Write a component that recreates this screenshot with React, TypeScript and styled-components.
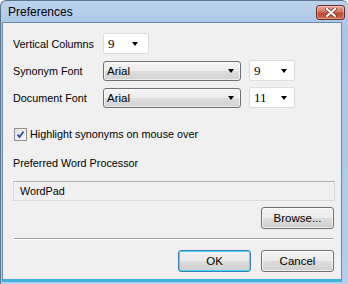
import React from 'react'
import styled, { createGlobalStyle } from 'styled-components'

const GlobalStyle = createGlobalStyle`
  html, body {
    margin: 0;
    padding: 0;
    background: #ffffff;
  }
  body {
    font-family: "Liberation Sans", Arial, sans-serif;
    font-size: 10.8px;
    color: #000;
  }
`;

const Window = styled.div`
  width: 348px;
  height: 284px;
  box-sizing: border-box;
  display: flex;
  flex-direction: column;
  background: linear-gradient(#bdd3ec, #a9c5e6 30px, #b4cde9);
  border-left: 1px solid #5a7590;
  border-top: 1px solid #5a7590;
  border-top-left-radius: 6px;
  border-top-right-radius: 6px;
  padding: 0 6px 2px 1px;
  overflow: hidden;
`;

const TitleBar = styled.div`
  height: 21px;
  flex: none;
  display: flex;
  align-items: center;
  justify-content: space-between;
  padding-left: 6px;
`;

const Title = styled.span`
  font-family: "Liberation Sans", Arial, sans-serif;
  font-size: 12px;
  color: #000;
  margin-top: 1px;
`;

const CloseButton = styled.div`
  width: 29px;
  height: 15px;
  margin-top: 2px;
  margin-right: -3px;
  box-sizing: border-box;
  border: 1px solid #6b2b25;
  border-radius: 3px;
  background: linear-gradient(#e9a99b, #d4735f 45%, #bf4a32 55%, #cf6a4e);
  display: flex;
  align-items: center;
  justify-content: center;
  box-shadow: inset 0 0 0 1px rgba(255, 255, 255, 0.35);
`;

const Client = styled.div`
  flex: 1;
  background: #f0f0f0;
  border: 1px solid #6d8aa8;
  border-bottom: 3px solid #3fb4da;
  display: flex;
  flex-direction: column;
  padding: 9px 6px 0 10px;
`;

const Row = styled.div<{ top: number }>`
  display: flex;
  align-items: center;
  margin-top: ${(p) => p.top}px;
`;

const Label = styled.span`
  width: 90px;
  flex: none;
  line-height: 14px;
`;

const PlainCombo = styled.div<{ gap?: number }>`
  width: 46px;
  height: 21px;
  box-sizing: border-box;
  background: #fff;
  border: 1px solid #dcdcdc;
  border-radius: 2px;
  display: flex;
  align-items: center;
  justify-content: space-between;
  padding: 0 ${(p) => p.gap ?? 10}px 0 4px;
  margin-left: ${(p) => (p.gap ? 8 : 0)}px;
  font-family: "Liberation Serif", "Times New Roman", serif;
  font-size: 13px;
`;

const FontCombo = styled.div`
  width: 138px;
  height: 20px;
  box-sizing: border-box;
  border: 1px solid #707070;
  border-radius: 3px;
  background: linear-gradient(#f4f4f4, #ececec 50%, #dedede 50%, #d2d2d2);
  box-shadow: inset 0 0 0 1px rgba(255, 255, 255, 0.6);
  display: flex;
  align-items: center;
  justify-content: space-between;
  padding: 0 6px 0 3px;
  font-size: 11.5px;
`;

const Arrow = styled.span`
  width: 0;
  height: 0;
  border-left: 3.5px solid transparent;
  border-right: 3.5px solid transparent;
  border-top: 4px solid #000;
  margin-top: 1px;
`;

const CheckRow = styled.label`
  display: flex;
  align-items: center;
  margin-top: 19px;
  margin-left: 1px;
  gap: 3px;
  line-height: 14px;
`;

const CheckBox = styled.span`
  width: 13px;
  height: 13px;
  box-sizing: border-box;
  border: 1px solid #8e8f8f;
  background: linear-gradient(135deg, #e2e2e2, #f8f8f8);
  display: flex;
  align-items: center;
  justify-content: center;
`;

const SectionLabel = styled.div`
  margin-top: 15px;
  line-height: 14px;
`;

const TextField = styled.div`
  margin-top: 11px;
  height: 20px;
  box-sizing: border-box;
  border: 1px solid #dadada;
  border-top-color: #b4b4b4;
  background: #f0f0f0;
  display: flex;
  align-items: center;
  padding-left: 6px;
`;

const ButtonRow = styled.div<{ top: number }>`
  display: flex;
  justify-content: flex-end;
  gap: 10px;
  margin-top: ${(p) => p.top}px;
  padding-right: 1px;
`;

const Button = styled.div<{ focused?: boolean }>`
  width: 73px;
  height: 22px;
  box-sizing: border-box;
  border: 1px solid ${(p) => (p.focused ? '#3c7fb1' : '#707070')};
  border-radius: 3px;
  background: linear-gradient(#f2f2f2, #ebebeb 50%, #dddddd 50%, #cfcfcf);
  box-shadow: inset 0 0 0 1px ${(p) => (p.focused ? '#48d8fb' : 'rgba(255,255,255,0.7)')};
  display: flex;
  align-items: center;
  justify-content: center;
  font-size: 11.5px;
`;

const Separator = styled.div`
  margin-top: 9px;
  margin-left: 1px;
  margin-right: 2px;
  height: 1px;
  background: #a0a0a0;
  border-bottom: 1px solid #ffffff;
`;

const ComboPlain = ({ value, gap }: { value: string; gap?: number }) => (
  <PlainCombo gap={gap}>
    <span>{value}</span>
    <Arrow />
  </PlainCombo>
);

const App: React.FC = () => {
  return (
    <>
      <GlobalStyle />
      <Window>
        <TitleBar>
          <Title>Preferences</Title>
          <CloseButton>
            <svg width="12" height="9" viewBox="0 0 12 9">
              <path
                d="M2 1 L10 8 M10 1 L2 8"
                stroke="#5a2a22"
                strokeWidth="3.4"
                strokeLinecap="round"
              />
              <path
                d="M2 1 L10 8 M10 1 L2 8"
                stroke="#ffffff"
                strokeWidth="2.2"
                strokeLinecap="round"
              />
            </svg>
          </CloseButton>
        </TitleBar>
        <Client>
          <Row top={1}>
            <Label>Vertical Columns</Label>
            <ComboPlain value="9" />
          </Row>
          <Row top={6}>
            <Label>Synonym Font</Label>
            <FontCombo>
              <span>Arial</span>
              <Arrow />
            </FontCombo>
            <ComboPlain value="9" gap={7} />
          </Row>
          <Row top={6}>
            <Label>Document Font</Label>
            <FontCombo>
              <span>Arial</span>
              <Arrow />
            </FontCombo>
            <ComboPlain value="11" gap={7} />
          </Row>
          <CheckRow>
            <CheckBox>
              <svg width="9" height="9" viewBox="0 0 9 9">
                <path d="M1.5 4.5 L3.5 7 L7.5 1.5" stroke="#2b4fa8" strokeWidth="1.8" fill="none" />
              </svg>
            </CheckBox>
            <span>Highlight synonyms on mouse over</span>
          </CheckRow>
          <SectionLabel>Preferred Word Processor</SectionLabel>
          <TextField>WordPad</TextField>
          <ButtonRow top={6}>
            <Button>Browse...</Button>
          </ButtonRow>
          <Separator />
          <ButtonRow top={10}>
            <Button focused>OK</Button>
            <Button>Cancel</Button>
          </ButtonRow>
        </Client>
      </Window>
    </>
  );
};

export default App;
